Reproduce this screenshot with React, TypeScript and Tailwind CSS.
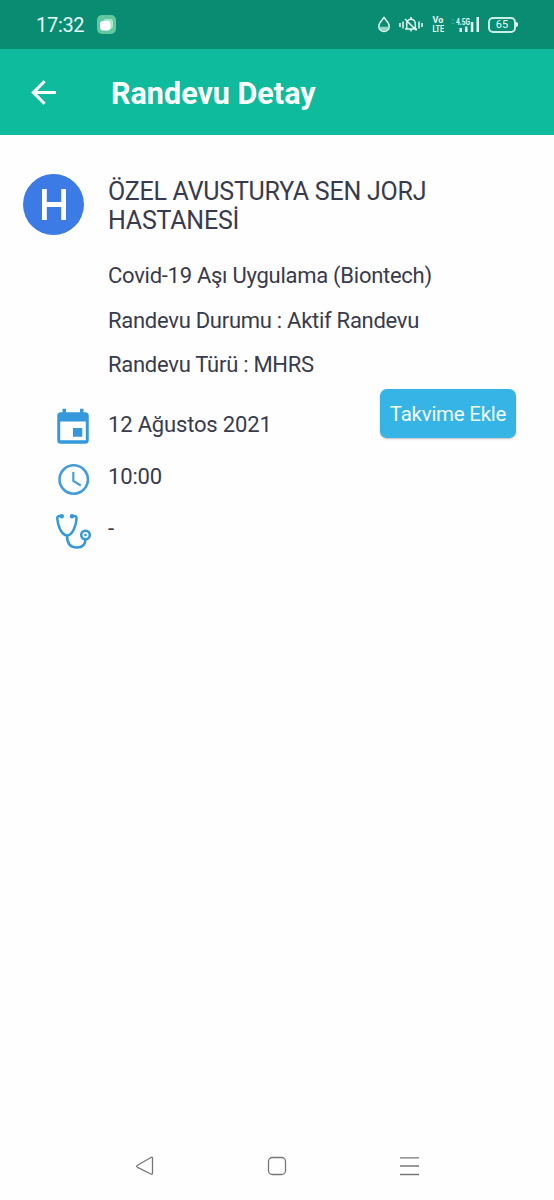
import type { ReactNode } from "react";

function StatusBar() {
  return (
    <div className="flex h-[49px] items-center bg-[#0a8c72] pl-[36px] text-[#e6fbf5]">
      <span className="w-[61px] whitespace-nowrap text-[20px] leading-[24px] tracking-[-0.3px]">17:32</span>
      <svg className="h-[19px] w-[19px]" viewBox="0 0 19 19">
        <rect width="19" height="19" rx="5" fill="#63c79f" />
        <rect x="6" y="4" width="10" height="10" rx="3" fill="#a9e8cc" />
        <rect x="3" y="6" width="10.500" height="9.500" rx="3" fill="#fff" />
      </svg>
      <svg
        className="ml-[262px] h-[17px] w-[12px]"
        viewBox="0 0 12 17"
        fill="none"
        stroke="currentColor"
      >
        <path d="M6 1.500C4 4.200 .8 7 .8 10.200a5.200 5.200 0 0 0 10.400 0C11.200 7 8 4.200 6 1.500Z" strokeWidth="1.500" />
        <path d="M1.500 10.700h9a4.500 4.500 0 0 1-9 0Z" fill="#8fd3c0" stroke="none" />
      </svg>
      <svg
        className="ml-[9px] h-[17px] w-[24px]"
        viewBox="0 0 24 17"
        fill="none"
        stroke="currentColor"
        strokeWidth="1.500"
      >
        <path d="M1 7v4M4 5.500v7M20 5.500v7M23 7v4M6 13h12M7.700 12.500V7.500a4.300 4.300 0 0 1 8.600 0v5M12 1v2M12 13v2.500M6 3l11.500 11.500" />
      </svg>
      <div className="ml-[9px] flex w-[12px] flex-col items-center text-[9px] font-bold leading-[9px]">
        <span className="tracking-[0.2px]">Vo</span>
        <span className="scale-x-[.8]">LTE</span>
      </div>
      <svg className="ml-[6px] h-[17px] w-[30px]" viewBox="0 0 30 17" fill="currentColor">
        <path d="M1.500 4.500 3 3l1.500 1.500M1.500 6.500 3 8l1.500-1.500" stroke="#3fa48d" fill="none" />
        <text x="6" y="9" fontSize="9" fontWeight="700" textLength="14" lengthAdjust="spacingAndGlyphs">4.5G</text>
        <rect x="9.500" y="12" width="2.500" height="4" />
        <rect x="15" y="10.500" width="2.500" height="5.500" />
        <rect x="20.800" y="6" width="2.500" height="10" />
        <rect x="26.500" y="1" width="2.500" height="15" />
      </svg>
      <div className="ml-[8px] flex h-[16px] w-[28px] items-center justify-center rounded-[5px] border-2 border-[#c9efe5] text-[11px] leading-none">
        65
      </div>
      <div className="h-[5px] w-[2px] rounded-r bg-current" />
    </div>
  );
}

function Header() {
  return (
    <header className="flex h-[86px] items-center bg-[#0ebb9c] pl-[24.500px] text-white">
      <svg className="h-[37px] w-[37px]" viewBox="0 0 24 24" fill="currentColor">
        <path d="M20 11H7.830l5.590-5.590L12 4l-8 8 8 8 1.410-1.410L7.830 13H20z" />
      </svg>
      <h1 className="ml-[49.500px] mt-[3px] whitespace-nowrap text-[30.500px] font-bold leading-[36px]">
        Randevu Detay
      </h1>
    </header>
  );
}

function CalendarIcon() {
  return (
    <svg className="h-[42px] w-[42px]" viewBox="0 0 24 24" fill="#3598da">
      <path d="M17.300 12h-5.300v5h5.300zM16 1v2H8V1H6v2H5a2 2 0 0 0-2 2v14a2 2 0 0 0 2 2h14a2 2 0 0 0 2-2V5a2 2 0 0 0-2-2h-1V1zm3.300 18H4.700V8.300h14.600z" />
    </svg>
  );
}

function ClockIcon() {
  return (
    <svg className="h-[42px] w-[42px]" viewBox="0 0 42 42" fill="none" stroke="#469cd9" strokeWidth="2.600">
      <circle cx="21.700" cy="20.500" r="14.200" />
      <path d="M21.300 13v9l7.500 4.500" strokeWidth="2.100" />
    </svg>
  );
}

function StethoscopeIcon() {
  return (
    <svg className="h-[42px] w-[42px]" viewBox="0 0 42 42" fill="none" stroke="#3598da" strokeWidth="2.500">
      <g transform="translate(0 -1.500)">
        <path d="M9 6.500H7.500Q5 6.500 5.300 9.500C5.800 16 9.500 26 15 26S24 16 24.500 9.500Q24.800 6.500 22 6.500H21" />
        <path d="M15 26C15 34 18 38 25 38C31 38 33.500 34.500 33.500 29.500" />
        <circle cx="9.800" cy="6.800" r="2.200" fill="#3598da" stroke="none" />
        <circle cx="20" cy="6.800" r="2.200" fill="#3598da" stroke="none" />
        <circle cx="33.500" cy="25.500" r="4.300" />
        <circle cx="33.500" cy="25.500" r="1.300" fill="#3598da" stroke="none" />
      </g>
    </svg>
  );
}

function DetailRow({ icon, children }: { icon: ReactNode; children: ReactNode }) {
  return (
    <div className="flex h-[52px] items-start pl-[52px]">
      {icon}
      <span className="ml-[14px] mt-[5px] whitespace-nowrap leading-[26px] tracking-[-0.17px]">{children}</span>
    </div>
  );
}

export default function App() {
  return (
    <div className="flex h-[1200px] w-[554px] flex-col overflow-hidden bg-[#fefefe] font-['Roboto',sans-serif] text-[22px] text-[#383b4d]">
      <StatusBar />
      <Header />
      <main className="flex-1">
        <section className="flex pl-[23px] pt-[39px]">
          <div className="flex h-[61px] w-[61px] shrink-0 items-center justify-center rounded-full bg-[#3c7be6]">
            <svg className="h-[31px] w-[26px]" viewBox="0 0 26 31" fill="none" stroke="#fff" strokeWidth="4.800">
              <path d="M3.400 0v31M22.600 0v31M3 15.500h20" />
            </svg>
          </div>
          <div className="ml-[24px] mt-[3px]">
            <h2 className="w-[340px] text-[25px] leading-[29px] tracking-[-0.23px]">
              ÖZEL AVUSTURYA SEN JORJ
              <br />
              HASTANESİ
            </h2>
            <div className="mt-[28px] flex flex-col gap-[18.500px] whitespace-nowrap leading-[26px] tracking-[-0.27px]">
              <p>Covid-19 Aşı Uygulama (Biontech)</p>
              <p>Randevu Durumu : Aktif Randevu</p>
              <p>Randevu Türü : MHRS</p>
            </div>
          </div>
        </section>
        <section className="flex justify-between pr-[38px]">
          <div className="pt-[29px]">
            <DetailRow icon={<CalendarIcon />}>12 Ağustos 2021</DetailRow>
            <DetailRow icon={<ClockIcon />}>10:00</DetailRow>
            <DetailRow icon={<StethoscopeIcon />}>-</DetailRow>
          </div>
          <button className="mt-[11px] h-[49px] w-[136px] whitespace-nowrap rounded-[7px] bg-[#35b4e5] pt-[2px] text-[20.500px] tracking-[-0.26px] text-[#f2fcff] shadow-[0_1px_2px_rgba(0,0,0,0.25)]">
            Takvime Ekle
          </button>
        </section>
      </main>
      <nav className="flex h-[68px] items-center pl-[134px]">
        <svg className="h-[22px] w-[286px]" viewBox="0 0 286 22" fill="none" stroke="#777" strokeWidth="1.300">
          <path d="M18.500 3.300v14.800q0 1.700-1.600.9L3.500 12.300q-1.800-1 0-2L16.900 2.500q1.600-.9 1.600.8Z" />
          <rect x="134.500" y="2.500" width="17" height="17" rx="3.800" />
          <path d="M266 2.800h19M266 11h19M266 19.500h19" />
        </svg>
      </nav>
    </div>
  );
}
